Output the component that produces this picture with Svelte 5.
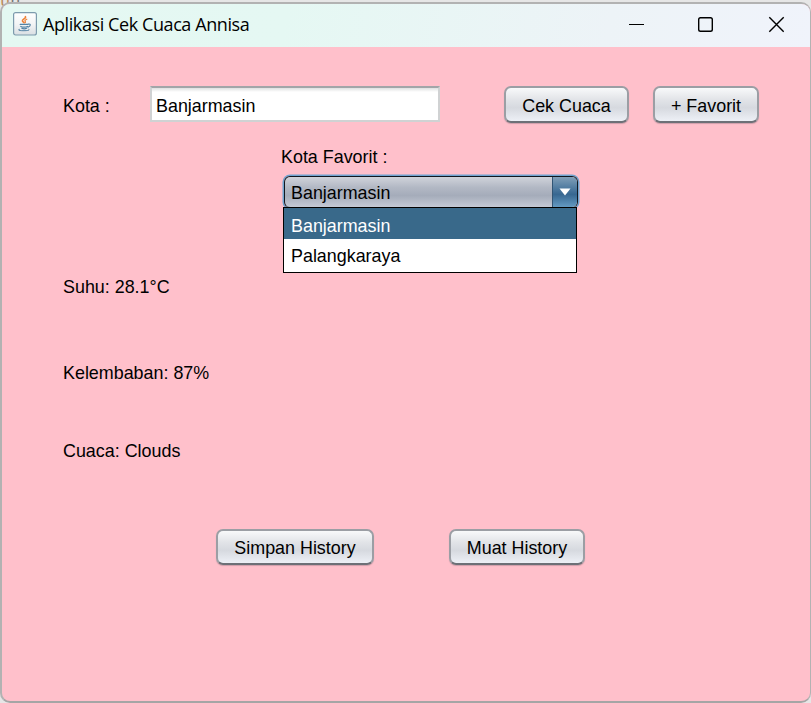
<script>
  let city = $state('Banjarmasin');
  let selected = $state('Banjarmasin');
  const favorites = ['Banjarmasin', 'Palangkaraya'];
</script>

<div class="desktop">
  <span class="behind"><i>u</i>n:</span>
  <main class="window">
    <header>
      <svg class="java" width="24" height="24" viewBox="0 0 24 24">
        <defs>
          <linearGradient id="tile" x1="0" y1="0" x2="0" y2="1">
            <stop offset="0" stop-color="#fff" />
            <stop offset=".5" stop-color="#f4f5f6" />
            <stop offset="1" stop-color="#d9dfe3" />
          </linearGradient>
        </defs>
        <rect x=".6" y=".6" width="22.8" height="22.4" rx="2" fill="url(#tile)" stroke="#7d9bad" stroke-width="1.2" />
        <g fill="none" stroke-linecap="round">
          <path d="M12.4 4.6c1.2 1.9-3.6 2.6-3 4.3.2.7 1.1 1.1 1.5 1.8" stroke="#ee8137" stroke-width="1.6" />
          <path d="M13.8 7.2c-2 .8-2.2 1.6-1.5 2.4.4.5.1.9-.5 1.2" stroke="#ee8137" stroke-width="1.2" />
          <path d="M7.2 12.4h7.6M7.8 14.4c1.4.9 5 .9 6.6 0M8.8 16.3c1.4.6 3.6.6 4.9 0M15.4 12.1c2.6-.6 2.5 2-.4 3" stroke="#5383a5" stroke-width="1.2" />
          <path d="M6.3 17.4c-2.4.6.3 1.4 4.7 1.3 4.2 0 6.4-.6 4.9-1.3" stroke="#5383a5" stroke-width="1" />
        </g>
      </svg>
      <span class="title">Aplikasi Cek Cuaca Annisa</span>
      <svg class="controls" width="158" height="20" viewBox="0 0 158 20" fill="none" stroke="#000">
        <path d="M1 10.5h15" stroke-width="1" />
        <rect x="70.7" y="3.7" width="13.6" height="13.6" rx="1.8" stroke-width="1.4" />
        <path d="M141.3 3.3l14.4 14.4M155.7 3.3l-14.4 14.4" stroke-width="1.4" />
      </svg>
    </header>
    <section class="content">
      <div class="search">
        <label for="city">Kota :</label>
        <input id="city" bind:value={city} />
        <button class="check">Cek Cuaca</button>
        <button class="add">+ Favorit</button>
      </div>
      <div class="favorites">
        <span>Kota Favorit :</span>
        <div class="combo">
          <div class="value">{selected}</div>
          <div class="arrow"><svg width="12" height="8" viewBox="0 0 12 8"><path d="M.5 .5h11L6 7.6z" fill="#fff" /></svg></div>
          <ul>
            {#each favorites as name}
              <li class:active={name === selected}>{name}</li>
            {/each}
          </ul>
        </div>
      </div>
      <p class="temp">Suhu: 28.1°C</p>
      <p class="humidity">Kelembaban: 87%</p>
      <p class="sky">Cuaca: Clouds</p>
      <div class="history">
        <button class="save">Simpan History</button>
        <button class="load">Muat History</button>
      </div>
    </section>
  </main>
</div>

<style>
  .desktop {
    position: relative;
    box-sizing: border-box;
    width: 811px;
    height: 703px;
    padding-top: 2px;
    overflow: hidden;
    background: #e6e6e6;
    font: 17.9px/20px "Liberation Sans", Arial, sans-serif;
    color: #000;
  }
  .behind {
    position: absolute;
    left: 0;
    top: -7px;
    font: 17px/17px "Liberation Mono", monospace;
    color: #777;
  }
  .behind i { font-style: normal; color: #b98a5d; }
  .window {
    position: relative;
    box-sizing: border-box;
    width: 811px;
    height: 701px;
    border: 2px solid #b2b2b2;
    border-right-width: 1px;
    border-bottom-color: #a5a5a5;
    border-radius: 10px;
    overflow: hidden;
    background: #ffc0cb;
  }
  header {
    display: flex;
    align-items: center;
    box-sizing: border-box;
    height: 43px;
    padding: 0 24px 3px 11px;
    background: linear-gradient(100deg, #e4f8f2 0%, #e5f8f3 35%, #edf3f7 75%, #f0f3fb 100%);
  }
  .title {
    margin-left: 6px;
    font: 18px/24px "Open Sans", "Noto Sans", sans-serif;
    letter-spacing: -.41px;
    white-space: nowrap;
  }
  .controls { margin-left: auto; }
  .content { padding-top: 39px; }
  .search { display: flex; align-items: flex-start; height: 38px; padding-left: 61px; }
  .search label { width: 87px; padding-top: 10px; }
  input {
    box-sizing: border-box;
    width: 290px;
    height: 36px;
    margin: 0 64px 0 0;
    padding: 4px 4px 0;
    border: 2px solid #d0d2d3;
    border-top: 2px solid #a2a5a8;
    border-radius: 0;
    background: linear-gradient(#dfe0e1, #fff 4px);
    font: inherit;
    color: inherit;
    outline: none;
  }
  button {
    box-sizing: border-box;
    height: 37px;
    margin: 0;
    padding: 2px 0 0;
    border: 2px solid #9b9ea4;
    border-bottom-color: #6d7077;
    border-radius: 7px;
    background: linear-gradient(#f8f9fa 0%, #e2e4e8 35%, #d6d9df 60%, #edf0f6 100%);
    box-shadow: 0 1px 1px #cf9eaa;
    font: inherit;
    color: inherit;
    white-space: nowrap;
  }
  .check { width: 125px; margin-right: 24px; }
  .add { width: 106px; }
  .favorites { padding: 23px 0 0 279px; }
  .favorites span { display: block; height: 29px; }
  .combo {
    position: relative;
    display: flex;
    box-sizing: border-box;
    width: 294px;
    height: 32px;
    margin-left: 3px;
    border: 1px solid #111820;
    border-bottom-color: #69717d;
    border-radius: 6px;
    background: linear-gradient(#d0d3da 0%, #b2b8c4 35%, #a5acba 62%, #c4c9d5 100%);
    box-shadow: 0 0 0 1.5px #70a3cf;
  }
  .value { flex: 1; padding: 6px 0 0 6px; }
  .arrow {
    display: flex;
    justify-content: center;
    box-sizing: border-box;
    width: 25px;
    padding-top: 11px;
    border-left: 1px solid #315575;
    border-radius: 0 5px 5px 0;
    background: linear-gradient(#819fb8 0%, #4c789e 40%, #376791 58%, #649ac2 100%);
  }
  ul {
    position: absolute;
    left: -2px;
    top: 30px;
    box-sizing: border-box;
    width: 294px;
    height: 66px;
    margin: 0;
    padding: 1px 0 0;
    border: 1px solid #000;
    background: #fff;
    list-style: none;
  }
  li { box-sizing: border-box; height: 30px; padding: 7px 0 0 7px; }
  .active { background: #39698a; color: #fff; }
  ul::before { content: ''; position: absolute; left: 0; right: 0; top: 0; height: 1px; background: #39698a; }
  p { margin: 0 0 0 61px; }
  .temp { margin-top: 69px; }
  .humidity { margin-top: 66px; }
  .sky { margin-top: 58px; }
  .history { display: flex; gap: 75px; padding: 68px 0 0 214px; }
  .history button { height: 36px; padding-top: 1px; }
  .save { width: 158px; }
  .load { width: 136px; }
</style>
